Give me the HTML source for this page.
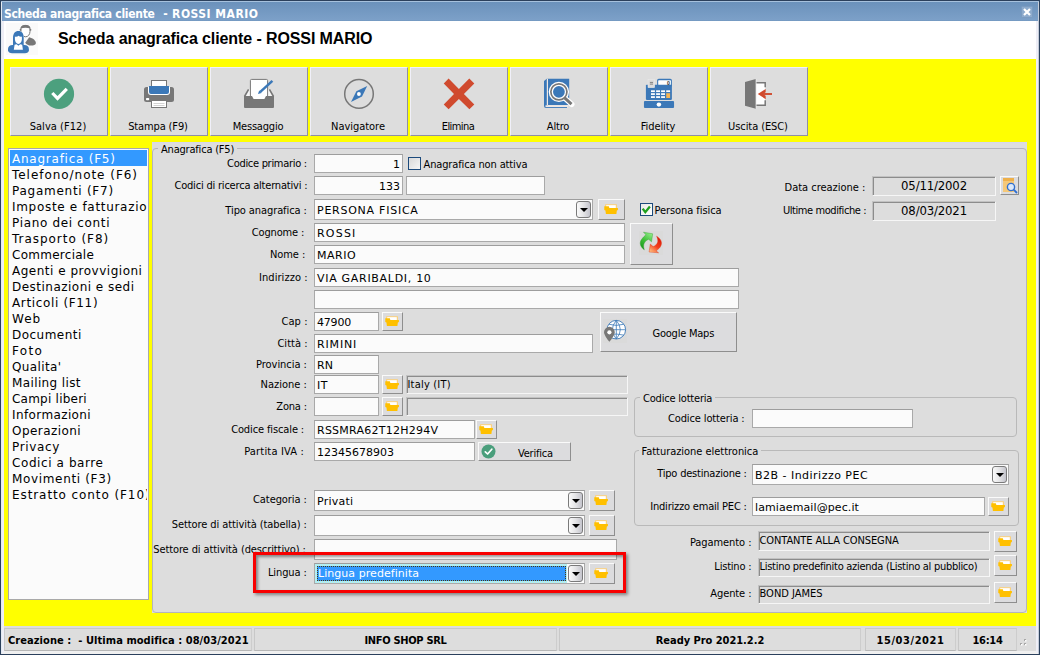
<!DOCTYPE html>
<html lang="it"><head><meta charset="utf-8"><title>Scheda anagrafica cliente - ROSSI MARIO</title>
<style>
*{box-sizing:border-box;margin:0;padding:0}
html,body{width:1040px;height:655px;overflow:hidden;background:#dddddd}
body{position:relative;font-family:"DejaVu Sans Condensed","Liberation Sans",sans-serif;font-size:11px;color:#000}
.a{position:absolute}
.t{position:absolute;white-space:nowrap;letter-spacing:-0.2px;line-height:14px;height:14px}
.r{text-align:right}
.v{font-family:"DejaVu Sans","Liberation Sans",sans-serif;letter-spacing:0.55px}
.in{position:absolute;background:#fbfbfb;border:1px solid #a9a9a9;border-top-color:#9d9d9d;font-family:"DejaVu Sans","Liberation Sans",sans-serif;font-size:11px;letter-spacing:0;white-space:nowrap;overflow:hidden;padding-left:2px;line-height:18px}
.sk{position:absolute;background:#dddddd;border:1px solid;border-color:#c2c2c2 #f6f6f6 #f6f6f6 #c2c2c2;box-shadow:inset 1px 1px 0 #8c8c8c;white-space:nowrap;overflow:hidden;letter-spacing:-0.2px;padding-left:0.5px;line-height:16px}
.btn{position:absolute;background:#dcdcde;border:1px solid;border-color:#fafafa #8e8e8e #8e8e8e #fafafa}
.gb{position:absolute;border:1px solid #b9b9b9;border-radius:4px}
.gl{position:absolute;background:#dddddd;padding:0 3px;white-space:nowrap;letter-spacing:-0.2px;line-height:14px;height:14px}
.dd{position:absolute;width:15px;height:17px;border:1px solid #7a7a7a;border-radius:3px;background:linear-gradient(90deg,#fafafa,#e4e4e6 50%,#c4c4cc)}
.dd:after{content:"";position:absolute;left:3px;top:6px;border:4px solid transparent;border-top:4px solid #000;border-bottom:0}
.cb{position:absolute;width:13px;height:13px;border:1px solid #1c4a7c;background:linear-gradient(135deg,#d8d8d8,#f6f6f6)}
.tb{position:absolute;top:67px;width:98px;height:69px;background:#dddddd;border:1px solid;border-color:#f0f0fa #8f8fa6 #8f8fa6 #f0f0fa}
.tb span{position:absolute;left:-2px;right:0;top:52px;text-align:center;letter-spacing:-0.2px;line-height:14px}
.tb svg{position:absolute;left:32px;top:10px}
.li{position:absolute;left:10px;width:137px;height:18px;font:12px/18px "DejaVu Sans","Liberation Sans",sans-serif;white-space:nowrap;overflow:hidden;padding-left:2px}
.sp{position:absolute;top:628px;height:23px;border:1px solid;border-color:#c8c8c8 #cdcdcd #b6b6b6 #c8c8c8;font:bold 11px/23px "DejaVu Sans Condensed","Liberation Sans",sans-serif;white-space:nowrap;text-align:center;overflow:hidden}
</style></head><body>

<div class="a" style="left:0;top:0;width:1040px;height:655px;background:#f0f0f0"></div>
<div class="a" style="left:0;top:0;width:1040px;height:21px;background:linear-gradient(#6990ba,#7ca0c8 95%,#6f95be)"></div>
<div class="a" style="left:0;top:0;width:1040px;height:1px;background:#2b405c"></div>
<div class="a" style="left:0;top:1px;width:1040px;height:1px;background:#a6c1dd"></div>
<div class="t" style="left:4px;top:7px;color:#fff;font:bold 12px/14px 'DejaVu Sans Condensed','Liberation Sans',sans-serif;letter-spacing:-0.28px">Scheda anagrafica cliente<span style="letter-spacing:4.800px"> </span><span style="letter-spacing:0.300px">- </span><span style="letter-spacing:0.500px">ROSSI MARIO</span></div>
<svg class="a" style="left:1021px;top:6px" width="12" height="12" viewBox="0 0 12 12"><rect x="0.5" y="0.5" width="11" height="11" rx="1" fill="#8dabcd" stroke="#7b9bc0"/><path d="M3 3 L9 9 M9 3 L3 9" stroke="#fff" stroke-width="2.2"/></svg>
<div class="a" style="left:4px;top:21px;width:1032px;height:38px;background:#fff"></div>
<div class="a" style="left:58px;top:30px;font:bold 16px/18px 'Liberation Sans',sans-serif;white-space:nowrap;letter-spacing:-0.1px">Scheda anagrafica cliente - ROSSI MARIO</div>
<div class="a" style="left:4px;top:59px;width:1032px;height:567px;background:#ffff00"></div>
<div class="a" style="left:4px;top:626px;width:1032px;height:25px;background:#dddddd"></div>
<div class="a" style="left:2px;top:21px;width:2px;height:632px;background:#eeeef6"></div>
<div class="a" style="left:0;top:0;width:1px;height:655px;background:#2b405c"></div>
<div class="a" style="left:1px;top:2px;width:1px;height:652px;background:#e4eaf1"></div>
<div class="a" style="left:1036px;top:21px;width:2px;height:632px;background:#eeeef6"></div>
<div class="a" style="left:1038px;top:2px;width:1px;height:652px;background:#c4ccd8"></div>
<div class="a" style="left:1039px;top:0;width:1px;height:655px;background:#2b405c"></div>
<div class="a" style="left:0;top:654px;width:1040px;height:1px;background:#2b405c"></div>
<div class="tb" style="left:10px"><svg width="32" height="32" viewBox="0 0 32 32"><circle cx="16" cy="15.900" r="15.100" fill="#4ca07e"/><path d="M9.300 15 L14.500 20.400 L23.800 10.800" fill="none" stroke="#fff" stroke-width="3.200" stroke-linejoin="miter"/></svg><span style="letter-spacing:0.05px">Salva (F12)</span></div>
<div class="tb" style="left:110px"><svg width="32" height="32" viewBox="0 0 32 32"><rect x="8.500" y="2.500" width="15" height="7" fill="#fff" stroke="#777777"/><rect x="1" y="9" width="30" height="15" rx="2.500" fill="#777777"/><path d="M5 9 v5 a3 3 0 0 0 3 3 h16 a3 3 0 0 0 3 -3 v-5z" fill="#fff"/><path d="M6 8 h20 v6 a2 2 0 0 1 -2 2 h-16 a2 2 0 0 1 -2 -2z" fill="#3b78b8"/><rect x="8.500" y="22.500" width="15" height="7" fill="#fff" stroke="#777777"/><path d="M10.500 25.500h11M10.500 27.500h11" stroke="#c6c6c6" stroke-width="0.800"/><rect x="3" y="19.900" width="3.200" height="2.300" rx="0.800" fill="#fff"/></svg><span style="letter-spacing:-0.13px">Stampa (F9)</span></div>
<div class="tb" style="left:210px"><svg width="32" height="32" viewBox="0 0 32 32"><path d="M1 18.500 L5.500 11.300 h21 L31 18.500z" fill="#f6f6f6"/><path d="M1.500 18.500 L5.600 11.300 M30.500 18.500 L26.400 11.300" stroke="#777777" stroke-width="1.600" fill="none"/><rect x="7.400" y="1.400" width="17.200" height="21" rx="1.200" fill="#fff" stroke="#777777"/><path d="M1 18 h8 l1.600 3 h10.800 l1.600 -3 h8 v11 a1 1 0 0 1 -1 1 h-28 a1 1 0 0 1 -1 -1z" fill="#777777"/><path d="M17.300 13.800 L29.400 2.800" stroke="#3b78b8" stroke-width="2.500"/><path d="M15 16 L16.200 12.600 L18.600 15z" fill="#3b78b8"/></svg><span style="letter-spacing:-0.2px">Messaggio</span></div>
<div class="tb" style="left:310px"><svg width="32" height="32" viewBox="0 0 32 32"><circle cx="16" cy="15.900" r="14.300" fill="none" stroke="#777777" stroke-width="1.500"/><path d="M24.200 8 L19 18.600 L8 24 L13.400 13.300z" fill="#3b78b8"/><circle cx="15.900" cy="16" r="1.900" fill="#fff"/></svg><span style="letter-spacing:-0.03px">Navigatore</span></div>
<div class="tb" style="left:410px"><svg width="32" height="32" viewBox="0 0 32 32"><path d="M5.600 0.600 L15.900 10.900 L26.300 0.600 L31.300 5.400 L20.900 16 L31.300 26.500 L26.400 31.300 L15.900 21.100 L5.600 31.300 L0.750 26.500 L11 16 L0.750 5.400z" fill="#d04a2e"/></svg><span style="letter-spacing:-0.58px">Elimina</span></div>
<div class="tb" style="left:510px"><svg width="32" height="32" viewBox="0 0 32 32"><path d="M1 3 L3.800 0.800 H26.200 V27 H5 V29.100 H24 V29.900 H3 a2 2 0 0 1 -2 -2z" fill="#3b78b8"/><rect x="3.800" y="0.800" width="1.200" height="26.600" fill="#efe8e4"/><rect x="2.500" y="27.300" width="22.500" height="1.800" fill="#efe8e4"/><circle cx="15.900" cy="13.850" r="10.200" fill="#fff"/><path d="M22 20.200 L28.700 26.300" stroke="#fff" stroke-width="5.600" stroke-linecap="round"/><circle cx="15.900" cy="13.850" r="8.050" fill="#fff" stroke="#777777" stroke-width="1.700"/><circle cx="15.900" cy="13.850" r="5.900" fill="#3b78b8"/><path d="M21.600 19.800 L28.500 26.200" stroke="#777777" stroke-width="3" stroke-linecap="butt"/></svg><span style="letter-spacing:-0.2px">Altro</span></div>
<div class="tb" style="left:610px"><svg width="32" height="32" viewBox="0 0 32 32"><rect x="2.900" y="6.800" width="26" height="15.100" rx="0.800" fill="#3b78b8"/><rect x="14.100" y="0.800" width="14.800" height="8" rx="1.600" fill="#3b78b8"/><rect x="15.200" y="2.300" width="12.700" height="4.500" rx="0.600" fill="#fff"/><text x="23.900" y="6.500" font-family="Liberation Sans,sans-serif" font-weight="bold" font-size="5.200" fill="#333">0</text><rect x="5" y="1.600" width="6.700" height="8.100" fill="#dcdcdc" stroke="#ececec" stroke-width="0.500"/><path d="M6.900 4.400h3.100M6.900 6.100h3.100" stroke="#6a6a6a" stroke-width="0.800"/><g fill="#fff"><rect x="8" y="12.3" width="3.900" height="1.750"/><rect x="13.1" y="12.3" width="3.900" height="1.750"/><rect x="18.1" y="12.3" width="3.900" height="1.750"/><rect x="8" y="15.2" width="3.900" height="1.750"/><rect x="13.1" y="15.2" width="3.900" height="1.750"/><rect x="18.1" y="15.2" width="3.900" height="1.750"/><rect x="8" y="18.2" width="3.900" height="1.750"/><rect x="13.1" y="18.2" width="3.900" height="1.750"/><rect x="18.1" y="18.2" width="3.900" height="1.750"/><rect x="23.200" y="12.300" width="3.900" height="1.750"/></g><rect x="23.200" y="15.200" width="3.900" height="4.800" fill="#f5b555"/><rect x="0.950" y="23.100" width="30.100" height="6.800" rx="1" fill="#3b78b8"/><ellipse cx="15.900" cy="26.600" rx="2.300" ry="2.100" fill="#fff"/></svg><span style="letter-spacing:-0.09px">Fidelity</span></div>
<div class="tb" style="left:710px"><svg width="32" height="32" viewBox="0 0 32 32"><rect x="13" y="4.700" width="9.200" height="22.500" fill="#fff"/><path d="M13 4.700 H22.200 V9.200 M22.200 22.200 V27.200 H13" fill="none" stroke="#777777" stroke-width="1.500"/><path d="M2 4 L12.800 0.900 V30.800 L2 27.700z" fill="#777777"/><path d="M13.200 1 V30.600" stroke="#eee" stroke-width="0.700"/><path d="M29 16 H19" stroke="#d04a2e" stroke-width="1.900"/><path d="M22.700 10.900 L14.800 15.950 L22.700 21.200 V17.700 L20 15.950 L22.700 14.300z" fill="#d04a2e"/></svg><span style="letter-spacing:-0.09px">Uscita (ESC)</span></div>
<svg class="a" style="left:6px;top:23px" width="32" height="32" viewBox="0 0 32 32"><rect width="32" height="32" fill="#fafafa"/><path d="M14.900 6 C14.900 3 17 2.400 19.500 2.400 C22 2.400 24 3 24 6 L24 8.500 C24 11.500 22 13.800 19.600 13.800 C17.200 13.800 14.900 11.500 14.900 8.500 Z" fill="#fff" stroke="#777" stroke-width="1"/><path d="M14.600 5.600 C14.800 2.800 17 1.900 19.500 1.900 C22 1.900 24.200 2.800 24.400 5.600 C21 4.300 18 4.300 14.600 5.600Z" fill="#777"/><circle cx="14.500" cy="6.800" r="0.900" fill="#777"/><circle cx="24.500" cy="6.800" r="0.900" fill="#777"/><path d="M23.200 14.200 C27 15 29.900 17.500 29.900 20.300 C29.900 22 27.500 22.600 25 22.600 C22.500 22.600 20.500 21.500 19.200 19.700 Z" fill="#777"/><path d="M6.600 15 C6.600 10.500 9 8 12.400 8 C15.800 8 18.100 10.500 18.100 15 L18.100 23.500 L6.600 23.500 Z" fill="#fafafa"/><path d="M7 15 C7 10.500 9 8.100 12.400 8.100 C15.800 8.100 17.700 10.500 17.700 15 L17.700 23 L7 23 Z" fill="#3b78b8"/><path d="M8.900 13.600 C10 14.100 11.500 13.800 12.600 12.700 C13.500 13.800 15 14.100 15.900 13.600 L15.900 16 C15.900 18.500 14.200 20.900 12.400 20.900 C10.600 20.900 8.900 18.500 8.900 16 Z" fill="#fff"/><path d="M2 26 C2 23.500 4 22 6.500 22 L18.400 22 C20.900 22 22.900 23.500 22.900 26 L22.900 27.500 C22.900 29 21 30.200 19 30.200 L6 30.200 C4 30.200 2 29 2 27.500 Z" fill="#3b78b8"/><path d="M8.600 21.800 L10.600 21.300 L12.400 22.700 L14.200 21.300 L16.200 21.800 L16.900 26.700 L7.800 26.700 Z" fill="#fff"/></svg>
<div class="a" style="left:8px;top:148px;width:141px;height:452px;background:#fbfbfb;border:1px solid #a9a9a9"></div>
<div class="a" style="left:10px;top:150px;width:137px;height:16px;background:#3399ff"></div>
<div class="li" style="top:150px;letter-spacing:0.76px;color:#fff;">Anagrafica (F5)</div>
<div class="li" style="top:166px;letter-spacing:0.96px;">Telefono/note (F6)</div>
<div class="li" style="top:182px;letter-spacing:0.74px;">Pagamenti (F7)</div>
<div class="li" style="top:198px;letter-spacing:0.69px;">Imposte e fatturazione</div>
<div class="li" style="top:214px;letter-spacing:0.67px;">Piano dei conti</div>
<div class="li" style="top:230px;letter-spacing:0.96px;">Trasporto (F8)</div>
<div class="li" style="top:246px;letter-spacing:0.27px;">Commerciale</div>
<div class="li" style="top:262px;letter-spacing:0.51px;">Agenti e provvigioni</div>
<div class="li" style="top:278px;letter-spacing:0.48px;">Destinazioni e sedi</div>
<div class="li" style="top:294px;letter-spacing:0.65px;">Articoli (F11)</div>
<div class="li" style="top:310px;letter-spacing:1.01px;">Web</div>
<div class="li" style="top:326px;letter-spacing:0.47px;">Documenti</div>
<div class="li" style="top:342px;letter-spacing:1.34px;">Foto</div>
<div class="li" style="top:358px;letter-spacing:0.38px;">Qualita'</div>
<div class="li" style="top:374px;letter-spacing:0.38px;">Mailing list</div>
<div class="li" style="top:390px;letter-spacing:0.23px;">Campi liberi</div>
<div class="li" style="top:406px;letter-spacing:0.39px;">Informazioni</div>
<div class="li" style="top:422px;letter-spacing:0.44px;">Operazioni</div>
<div class="li" style="top:438px;letter-spacing:0.66px;">Privacy</div>
<div class="li" style="top:454px;letter-spacing:0.59px;">Codici a barre</div>
<div class="li" style="top:470px;letter-spacing:0.66px;">Movimenti (F3)</div>
<div class="li" style="top:486px;letter-spacing:0.91px;">Estratto conto (F10)</div>
<div class="a" style="left:152px;top:142px;width:875px;height:471px;background:#dddddd;border-top:1px solid #d6d6ee"></div>
<div class="gb" style="left:152px;top:148px;width:875px;height:465px;border-color:#b4b4bc"></div>
<div class="gl" style="left:158px;top:143px">Anagrafica (F5)</div>
<div class="t r" style="left:46.80000000000001px;width:260px;top:157px;letter-spacing:-0.3px;">Codice primario :</div>
<div class="in" style="left:314px;top:154px;width:89px;height:19px;line-height:19px;text-align:right;padding-right:2px">1</div>
<div class="cb" style="left:408px;top:157px"></div>
<div class="t " style="left:423.5px;top:158px"><span style="letter-spacing:-0.13px">Anagrafica non attiva</span></div>
<div class="t r" style="left:47.30000000000001px;width:260px;top:179px;">Codici di ricerca alternativi :</div>
<div class="in" style="left:314px;top:176px;width:89px;height:19px;line-height:19px;text-align:right;padding-right:2px">133</div>
<div class="in" style="left:406px;top:176px;width:139px;height:19px;line-height:19px;"></div>
<div class="t r" style="left:46.80000000000001px;width:260px;top:204px;letter-spacing:-0.09px;">Tipo anagrafica :</div>
<div class="in" style="left:314px;top:199px;width:279px;height:21px;line-height:22px;letter-spacing:0.75px;">PERSONA FISICA</div>
<div class="dd" style="left:576px;top:201px"></div>
<div class="btn" style="left:598px;top:199px;width:27px;height:21px"><svg class="a" style="left:5px;top:4px" width="14.400" height="10.500" preserveAspectRatio="none" viewBox="0 0 15 11"><path d="M1.200 0.300 H13.400 V5 H1.200z" fill="#ffcf70"/><path d="M2.300 1.200 H12.300 V4.500 H2.300z" fill="#fff"/><path d="M0.300 2.300 H5 L5.600 4.100 H14.500 V6.300 L13.400 6.800 L12.900 10.600 H2 L1.500 6.800 L0.300 6.300z" fill="#ffc000"/></svg></div>
<div class="cb" style="left:640px;top:203px;background:linear-gradient(135deg,#eaeae6,#fff)"><svg class="a" style="left:0;top:0" width="11" height="11" viewBox="0 0 11 11"><path d="M1.700 4.600 L4.300 8.200 L8.900 2.500" fill="none" stroke="#1fa01f" stroke-width="2.300"/></svg></div>
<div class="t " style="left:654.5px;top:204px"><span style="letter-spacing:-0.07px">Persona fisica</span></div>
<div class="t r" style="left:44.10000000000002px;width:260px;top:226px;letter-spacing:-0.17px;">Cognome :</div>
<div class="in" style="left:314px;top:223px;width:311px;height:19px;line-height:19px;letter-spacing:1.2px;">ROSSI</div>
<div class="t r" style="left:45.30000000000001px;width:260px;top:248px;letter-spacing:-0.05px;">Nome :</div>
<div class="in" style="left:314px;top:245px;width:311px;height:19px;line-height:19px;letter-spacing:0.5px;">MARIO</div>
<div class="t r" style="left:47.60000000000002px;width:260px;top:271px;letter-spacing:0.05px;">Indirizzo :</div>
<div class="in" style="left:314px;top:268px;width:425px;height:19px;line-height:19px;letter-spacing:0.7px;">VIA GARIBALDI, 10</div>
<div class="in" style="left:314px;top:290px;width:425px;height:19px;line-height:19px;"></div>
<div class="btn" style="left:630px;top:223px;width:43px;height:42px"><svg class="a" style="left:8px;top:7px" width="24" height="24" viewBox="0 0 24 24"><defs><linearGradient id="gg" x1="0.7" y1="0" x2="0.2" y2="1"><stop offset="0" stop-color="#8eea84"/><stop offset="0.5" stop-color="#3fbf3a"/><stop offset="1" stop-color="#15961a"/></linearGradient><linearGradient id="rg" x1="0.8" y1="0" x2="0.2" y2="1"><stop offset="0" stop-color="#d81408"/><stop offset="0.55" stop-color="#f4401c"/><stop offset="1" stop-color="#ffc080"/></linearGradient></defs><rect width="24" height="24" fill="#dadada"/><path d="M5.300 18.800 C1.500 16 0 12 2.500 8.500 C4 6.300 5.500 5 7 3.800 L4.500 1.200 L13.700 2.800 L12.500 10.800 L9.700 8.300 C5.500 10 3.500 13.500 5.300 18.800 Z" fill="url(#gg)" stroke="#2a9a2a" stroke-width="0.400"/><path d="M17.600 5.200 C21.500 7.500 23.500 11 22 14.500 C21 17 19 18.500 17 19.800 L19.600 21.800 L10.100 21 L11.300 13.100 L14.100 15.600 C18.300 14 20.300 10.500 17.600 5.200 Z" fill="url(#rg)" stroke="#e03010" stroke-width="0.400"/></svg></div>
<div class="t r" style="left:47.69999999999999px;width:260px;top:315px;letter-spacing:0.1px;">Cap :</div>
<div class="in" style="left:314px;top:312px;width:65px;height:19px;line-height:19px;letter-spacing:-0.2px;">47900</div>
<div class="btn" style="left:382px;top:312px;width:21px;height:19px"><svg class="a" style="left:2px;top:3px" width="14.400" height="10.500" preserveAspectRatio="none" viewBox="0 0 15 11"><path d="M1.200 0.300 H13.400 V5 H1.200z" fill="#ffcf70"/><path d="M2.300 1.200 H12.300 V4.500 H2.300z" fill="#fff"/><path d="M0.300 2.300 H5 L5.600 4.100 H14.500 V6.300 L13.400 6.800 L12.900 10.600 H2 L1.500 6.800 L0.300 6.300z" fill="#ffc000"/></svg></div>
<div class="t r" style="left:47.69999999999999px;width:260px;top:337px;letter-spacing:0.05px;">Città :</div>
<div class="in" style="left:314px;top:334px;width:279px;height:19px;line-height:19px;letter-spacing:0.85px;">RIMINI</div>
<div class="t r" style="left:46.80000000000001px;width:260px;top:358px;letter-spacing:-0.05px;">Provincia :</div>
<div class="in" style="left:314px;top:355px;width:65px;height:19px;line-height:19px;letter-spacing:0px;">RN</div>
<div class="t r" style="left:46.80000000000001px;width:260px;top:378px;letter-spacing:0px;">Nazione :</div>
<div class="in" style="left:314px;top:375px;width:65px;height:19px;line-height:19px;letter-spacing:0.5px;">IT</div>
<div class="btn" style="left:382px;top:375px;width:21px;height:19px"><svg class="a" style="left:2px;top:3px" width="14.400" height="10.500" preserveAspectRatio="none" viewBox="0 0 15 11"><path d="M1.200 0.300 H13.400 V5 H1.200z" fill="#ffcf70"/><path d="M2.300 1.200 H12.300 V4.500 H2.300z" fill="#fff"/><path d="M0.300 2.300 H5 L5.600 4.100 H14.500 V6.300 L13.400 6.800 L12.900 10.600 H2 L1.500 6.800 L0.300 6.300z" fill="#ffc000"/></svg></div>
<div class="sk" style="left:406px;top:375px;width:222px;height:19px;line-height:18px;letter-spacing:0.2px">Italy (IT)</div>
<div class="t r" style="left:46.80000000000001px;width:260px;top:400px;">Zona :</div>
<div class="in" style="left:314px;top:397px;width:65px;height:19px;line-height:19px;"></div>
<div class="btn" style="left:382px;top:397px;width:21px;height:19px"><svg class="a" style="left:2px;top:3px" width="14.400" height="10.500" preserveAspectRatio="none" viewBox="0 0 15 11"><path d="M1.200 0.300 H13.400 V5 H1.200z" fill="#ffcf70"/><path d="M2.300 1.200 H12.300 V4.500 H2.300z" fill="#fff"/><path d="M0.300 2.300 H5 L5.600 4.100 H14.500 V6.300 L13.400 6.800 L12.900 10.600 H2 L1.500 6.800 L0.300 6.300z" fill="#ffc000"/></svg></div>
<div class="sk" style="left:406px;top:397px;width:222px;height:19px;"></div>
<div class="t r" style="left:44.10000000000002px;width:260px;top:423px;letter-spacing:-0.12px;">Codice fiscale :</div>
<div class="in" style="left:314px;top:420px;width:161px;height:19px;line-height:19px;letter-spacing:0.24px;">RSSMRA62T12H294V</div>
<div class="btn" style="left:476px;top:420px;width:21px;height:19px"><svg class="a" style="left:2px;top:3px" width="14.400" height="10.500" preserveAspectRatio="none" viewBox="0 0 15 11"><path d="M1.200 0.300 H13.400 V5 H1.200z" fill="#ffcf70"/><path d="M2.300 1.200 H12.300 V4.500 H2.300z" fill="#fff"/><path d="M0.300 2.300 H5 L5.600 4.100 H14.500 V6.300 L13.400 6.800 L12.900 10.600 H2 L1.500 6.800 L0.300 6.300z" fill="#ffc000"/></svg></div>
<div class="t r" style="left:44.10000000000002px;width:260px;top:445px;"><span style="letter-spacing:0.18px">Partita IVA :</span></div>
<div class="in" style="left:314px;top:442px;width:161px;height:19px;line-height:19px;letter-spacing:0px;">12345678903</div>
<div class="btn" style="left:478px;top:442px;width:93px;height:19px"><svg class="a" style="left:2px;top:1px" width="15" height="15" viewBox="0 0 15 15"><circle cx="7.5" cy="7.5" r="7" fill="#4a9e7c"/><path d="M4.3 7.8 L6.6 10 L10.8 5.2" fill="none" stroke="#fff" stroke-width="1.7" stroke-linecap="round" stroke-linejoin="round"/></svg><div class="t" style="left:39px;top:4px">Verifica</div></div>
<div class="btn" style="left:600px;top:312px;width:137px;height:40px"><svg class="a" style="left:2px;top:6px" width="24" height="24" viewBox="0 0 24 24"><rect width="24" height="24" fill="#dadada"/><circle cx="13.300" cy="10.700" r="9.300" fill="#fff" stroke="#3b78b8" stroke-width="0.900"/><path d="M4 10.700h18.600M13.300 1.400v18.600M6 5.300q7.300 2.200 14.600 0M6 16.100q7.300-2.200 14.600 0M13.300 1.400q-8 9.300 0 18.600M13.300 1.400q8 9.300 0 18.600" fill="none" stroke="#3b78b8" stroke-width="0.800"/><path d="M6.400 7.800 a5.400 5.400 0 0 1 5.400 5.400 c0 3.200 -5.400 9.600 -5.400 9.600 s-5.400 -6.400 -5.400 -9.600 a5.400 5.400 0 0 1 5.400 -5.400z" fill="#777"/><circle cx="6.400" cy="13.300" r="2.100" fill="#fff"/></svg><div class="t" style="left:51.500px;top:14px;letter-spacing:-0.23px">Google Maps</div></div>
<div class="t r" style="left:605.3px;width:260px;top:181px;letter-spacing:-0.02px;">Data creazione :</div>
<div class="sk" style="left:872px;top:176px;width:124px;height:20px;text-align:center;font-size:13px;letter-spacing:-0.15px;line-height:18px;padding:0">05/11/2002</div>
<div class="t r" style="left:606.0999999999999px;width:260px;top:204px;"><span style="letter-spacing:-0.42px">Ultime modifiche :</span></div>
<div class="sk" style="left:872px;top:201px;width:124px;height:20px;text-align:center;font-size:13px;letter-spacing:-0.15px;line-height:18px;padding:0">08/03/2021</div>
<div class="btn" style="left:1000px;top:176px;width:19px;height:19px"><svg class="a" style="left:1px;top:1px" width="16" height="16" viewBox="0 0 16 16"><rect x="1" y="0" width="11" height="14" fill="#f5c878"/><rect x="1" y="0" width="11" height="3" fill="#eeb04a"/><circle cx="9" cy="9" r="3.600" fill="#dbe9fa" stroke="#2f6fd0" stroke-width="1.400"/><path d="M11.700 11.700 L15 15" stroke="#2f6fd0" stroke-width="1.800"/></svg></div>
<div class="gb" style="left:634px;top:397px;width:383px;height:40px"></div>
<div class="gl" style="left:640px;top:392px">Codice lotteria</div>
<div class="t r" style="left:484.5999999999999px;width:260px;top:412px;letter-spacing:-0.12px;">Codice lotteria :</div>
<div class="in" style="left:752px;top:409px;width:161px;height:19px;line-height:19px;"></div>
<div class="gb" style="left:634px;top:450px;width:385px;height:76px"></div>
<div class="gl" style="left:638.500px;top:445px;letter-spacing:-0.03px">Fatturazione elettronica</div>
<div class="t r" style="left:486.69999999999993px;width:260px;top:467px;">Tipo destinazione :</div>
<div class="in" style="left:752px;top:464px;width:257px;height:21px;line-height:22px;letter-spacing:0.48px;">B2B - Indirizzo PEC</div>
<div class="dd" style="left:992px;top:466px"></div>
<div class="t r" style="left:486.69999999999993px;width:260px;top:500px;">Indirizzo email PEC :</div>
<div class="in" style="left:752px;top:497px;width:233px;height:19px;line-height:19px;letter-spacing:0.1px;">lamiaemail@pec.it</div>
<div class="btn" style="left:988px;top:497px;width:21px;height:19px"><svg class="a" style="left:2px;top:3px" width="14.400" height="10.500" preserveAspectRatio="none" viewBox="0 0 15 11"><path d="M1.200 0.300 H13.400 V5 H1.200z" fill="#ffcf70"/><path d="M2.300 1.200 H12.300 V4.500 H2.300z" fill="#fff"/><path d="M0.300 2.300 H5 L5.600 4.100 H14.500 V6.300 L13.400 6.800 L12.900 10.600 H2 L1.500 6.800 L0.300 6.300z" fill="#ffc000"/></svg></div>
<div class="t r" style="left:491.4px;width:260px;top:536px;letter-spacing:-0.08px;">Pagamento :</div>
<div class="sk" style="left:758px;top:531px;width:232px;height:20px;line-height:18px;letter-spacing:-0.1px">CONTANTE ALLA CONSEGNA</div>
<div class="btn" style="left:994px;top:531px;width:23px;height:21px"><svg class="a" style="left:3px;top:4px" width="14.400" height="10.500" preserveAspectRatio="none" viewBox="0 0 15 11"><path d="M1.200 0.300 H13.400 V5 H1.200z" fill="#ffcf70"/><path d="M2.300 1.200 H12.300 V4.500 H2.300z" fill="#fff"/><path d="M0.300 2.300 H5 L5.600 4.100 H14.500 V6.300 L13.400 6.800 L12.900 10.600 H2 L1.500 6.800 L0.300 6.300z" fill="#ffc000"/></svg></div>
<div class="t r" style="left:491.4px;width:260px;top:560px;">Listino :</div>
<div class="sk" style="left:758px;top:558px;width:232px;height:19px;letter-spacing:-0.28px">Listino predefinito azienda (Listino al pubblico)</div>
<div class="btn" style="left:994px;top:555px;width:23px;height:21px"><svg class="a" style="left:3px;top:4px" width="14.400" height="10.500" preserveAspectRatio="none" viewBox="0 0 15 11"><path d="M1.200 0.300 H13.400 V5 H1.200z" fill="#ffcf70"/><path d="M2.300 1.200 H12.300 V4.500 H2.300z" fill="#fff"/><path d="M0.300 2.300 H5 L5.600 4.100 H14.500 V6.300 L13.400 6.800 L12.900 10.600 H2 L1.500 6.800 L0.300 6.300z" fill="#ffc000"/></svg></div>
<div class="t r" style="left:491.4px;width:260px;top:587px;letter-spacing:-0.1px;">Agente :</div>
<div class="sk" style="left:758px;top:585px;width:232px;height:19px;letter-spacing:0">BOND JAMES</div>
<div class="btn" style="left:994px;top:582px;width:23px;height:21px"><svg class="a" style="left:3px;top:4px" width="14.400" height="10.500" preserveAspectRatio="none" viewBox="0 0 15 11"><path d="M1.200 0.300 H13.400 V5 H1.200z" fill="#ffcf70"/><path d="M2.300 1.200 H12.300 V4.500 H2.300z" fill="#fff"/><path d="M0.300 2.300 H5 L5.600 4.100 H14.500 V6.300 L13.400 6.800 L12.900 10.600 H2 L1.500 6.800 L0.300 6.300z" fill="#ffc000"/></svg></div>
<div class="t r" style="left:46.80000000000001px;width:260px;top:493px;letter-spacing:-0.08px;">Categoria :</div>
<div class="in" style="left:314px;top:490px;width:271px;height:21px;line-height:22px;letter-spacing:0.25px;">Privati</div>
<div class="dd" style="left:568px;top:492px"></div>
<div class="btn" style="left:589px;top:490px;width:26px;height:21px"><svg class="a" style="left:4px;top:4px" width="14.400" height="10.500" preserveAspectRatio="none" viewBox="0 0 15 11"><path d="M1.200 0.300 H13.400 V5 H1.200z" fill="#ffcf70"/><path d="M2.300 1.200 H12.300 V4.500 H2.300z" fill="#fff"/><path d="M0.300 2.300 H5 L5.600 4.100 H14.500 V6.300 L13.400 6.800 L12.900 10.600 H2 L1.500 6.800 L0.300 6.300z" fill="#ffc000"/></svg></div>
<div class="t r" style="left:46.80000000000001px;width:260px;top:518px;letter-spacing:-0.09px;">Settore di attività (tabella) :</div>
<div class="in" style="left:314px;top:515px;width:271px;height:21px;line-height:22px;"></div>
<div class="dd" style="left:568px;top:517px"></div>
<div class="btn" style="left:589px;top:515px;width:26px;height:21px"><svg class="a" style="left:4px;top:4px" width="14.400" height="10.500" preserveAspectRatio="none" viewBox="0 0 15 11"><path d="M1.200 0.300 H13.400 V5 H1.200z" fill="#ffcf70"/><path d="M2.300 1.200 H12.300 V4.500 H2.300z" fill="#fff"/><path d="M0.300 2.300 H5 L5.600 4.100 H14.500 V6.300 L13.400 6.800 L12.900 10.600 H2 L1.500 6.800 L0.300 6.300z" fill="#ffc000"/></svg></div>
<div class="t r" style="left:45.80000000000001px;width:260px;top:543px;letter-spacing:-0.1px;">Settore di attività (descrittivo) :</div>
<div class="in" style="left:314px;top:539px;width:303px;height:21px;line-height:22px;"></div>
<div class="t r" style="left:46.80000000000001px;width:260px;top:566px;letter-spacing:-0.1px;">Lingua :</div>
<div class="in" style="left:314px;top:563px;width:271px;height:21px;line-height:22px;"></div>
<div class="a" style="left:315px;top:564px;width:252px;height:19px;background:#b4eef0"></div>
<div class="dd" style="left:568px;top:565px"></div>
<div class="btn" style="left:589px;top:563px;width:26px;height:21px"><svg class="a" style="left:4px;top:4px" width="14.400" height="10.500" preserveAspectRatio="none" viewBox="0 0 15 11"><path d="M1.200 0.300 H13.400 V5 H1.200z" fill="#ffcf70"/><path d="M2.300 1.200 H12.300 V4.500 H2.300z" fill="#fff"/><path d="M0.300 2.300 H5 L5.600 4.100 H14.500 V6.300 L13.400 6.800 L12.900 10.600 H2 L1.500 6.800 L0.300 6.300z" fill="#ffc000"/></svg></div>
<div class="a" style="left:317px;top:566px;width:249px;height:15px;background:#3399ff;color:#fff;outline:1px dotted #4a3a10;outline-offset:-1px;font:11px/16px 'DejaVu Sans','Liberation Sans',sans-serif;letter-spacing:0.05px;padding-left:1px;white-space:nowrap">Lingua predefinita</div>
<div class="a" style="left:253px;top:552px;width:373px;height:41px;border:3px solid #f80000;box-shadow:2px 2px 3px rgba(0,0,0,0.4), inset 2px 2px 3px rgba(0,0,0,0.4)"></div>
<div class="sp" style="left:4px;width:248px;text-align:left;padding-left:3px;letter-spacing:0.06px">Creazione :&nbsp; - Ultima modifica : 08/03/2021</div>
<div class="sp" style="left:254px;width:303px;letter-spacing:-0.3px">INFO SHOP SRL</div>
<div class="sp" style="left:559px;width:302px;letter-spacing:-0.04px">Ready Pro 2021.2.2</div>
<div class="sp" style="left:865px;width:91px;letter-spacing:0.55px">15/03/2021</div>
<div class="sp" style="left:958px;width:59px;letter-spacing:-0.3px">16:14</div>
<svg class="a" style="left:1019px;top:638px" width="9" height="9" viewBox="0 0 9 9"><g fill="#a8a8a8"><rect x="5" y="1" width="2" height="2"/><rect x="5" y="5" width="2" height="2"/><rect x="1" y="5" width="2" height="2"/></g><g fill="#fff"><rect x="6" y="2" width="1.500" height="1.500"/><rect x="6" y="6" width="1.500" height="1.500"/><rect x="2" y="6" width="1.500" height="1.500"/></g></svg>

</body></html>
